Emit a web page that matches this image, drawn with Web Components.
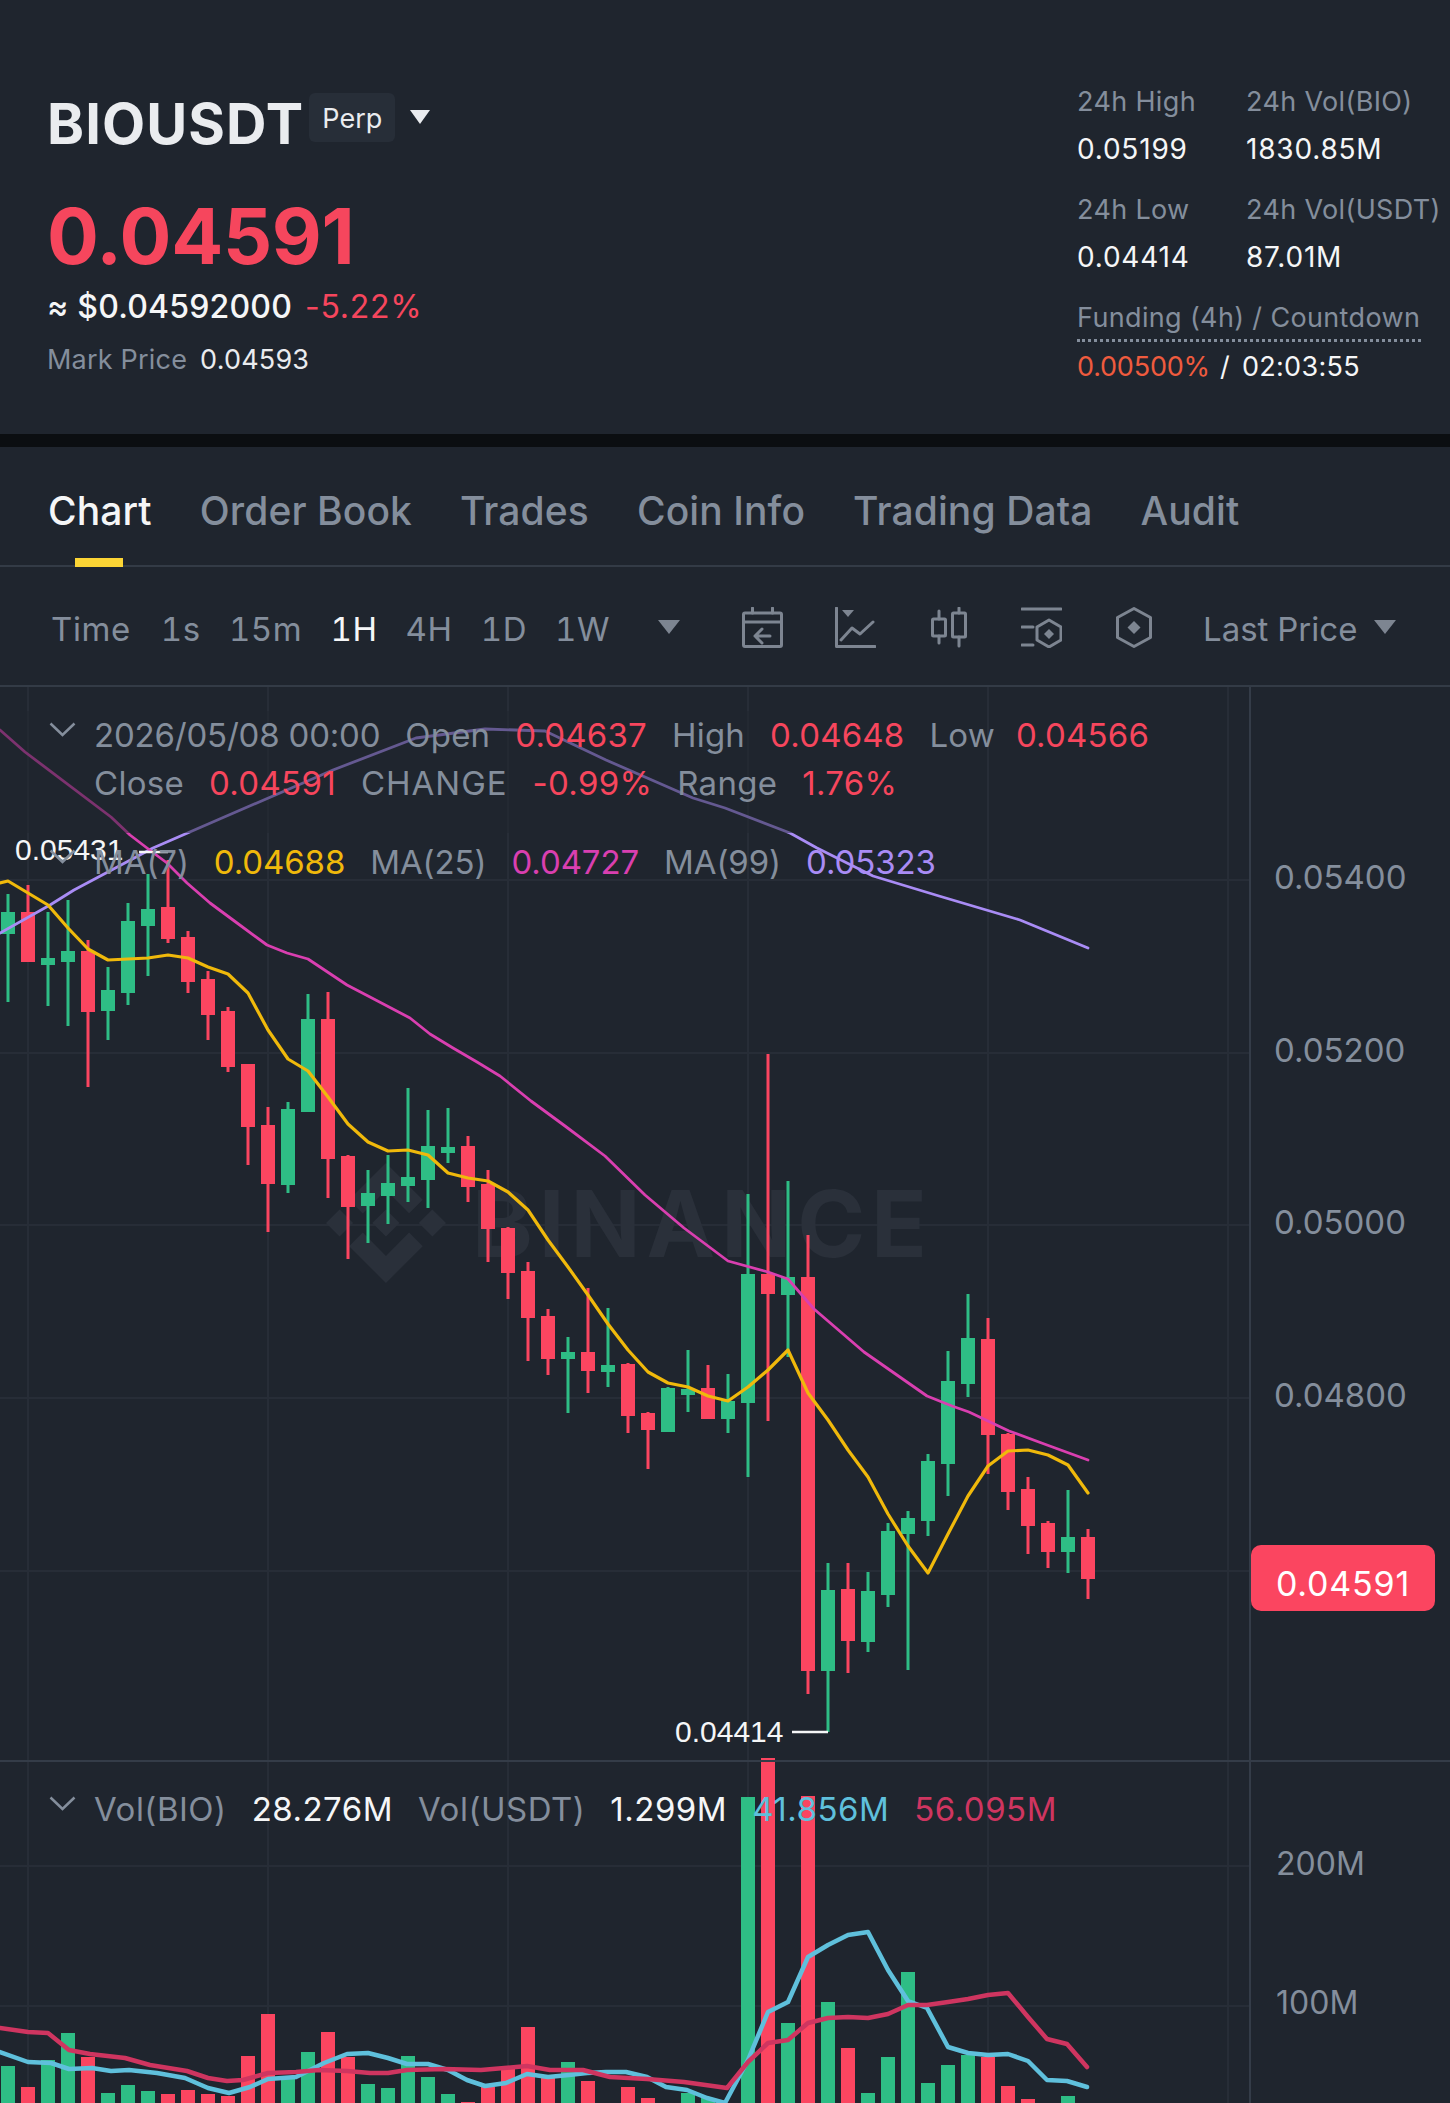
<!doctype html>
<html>
<head>
<meta charset="utf-8">
<title>BIOUSDT Perp</title>
<style>
  html, body { margin: 0; padding: 0; background: #1f252e; }
  body { font-family: Inter, "Liberation Sans", sans-serif; color: #eaecef; width: 1450px; height: 2103px; overflow: hidden; }
</style>
</head>
<body>
<ticker-header></ticker-header>
<chart-tabs active="Chart" items="Chart|Order Book|Trades|Coin Info|Trading Data|Audit"></chart-tabs>
<chart-toolbar></chart-toolbar>
<kline-chart>
  <chart-legend slot="main">
    <legend-row chevron>
      <span style="letter-spacing:-.2px">2026/05/08 00:00</span><span>Open</span><b>0.04637</b><span>High</span><b>0.04648</b><span style="margin-right:21px">Low</span><b>0.04566</b>
    </legend-row>
    <legend-row indent style="letter-spacing:.3px">
      <span>Close</span><b>0.04591</b><span style="letter-spacing:1px">CHANGE</span><b>-0.99%</b><span>Range</span><b>1.76%</b>
    </legend-row>
  </chart-legend>
  <legend-row slot="ma" chevron style="letter-spacing:-.1px">
    <span>MA(7)</span><b style="color:#f0b90b">0.04688</b><span>MA(25)</span><b style="color:#d93fb0">0.04727</b><span>MA(99)</span><b style="color:#a98cf5">0.05323</b>
  </legend-row>
  <legend-row slot="vol" chevron style="letter-spacing:.5px">
    <span>Vol(BIO)</span><b style="color:#f5f6f7">28.276M</b><span>Vol(USDT)</span><b style="color:#f5f6f7">1.299M</b><b style="color:#5fc0dc">41.856M</b><b style="color:#cf3560">56.095M</b>
  </legend-row>
</kline-chart>

<script>
class StatCell extends HTMLElement {
  constructor() {
    super()
    this.attachShadow({ mode: 'open' })
  }

  connectedCallback() {
    this.shadowRoot.innerHTML = `
      <style>
        :host { display: flex; flex-direction: column; gap: 11px; font-size: 27px; line-height: 36px; white-space: nowrap; }
        .label { color: #848e9c; letter-spacing: 0.35px; }
        .value { color: #f5f6f7; font-size: 28px; letter-spacing: 0.8px; }
        :host([dotted]) { gap: 7px; }
        :host([dotted]) .label { border-bottom: 3px dotted #848e9c; padding-bottom: 3px; }
        :host([dotted]) .value { font-size: 27px; letter-spacing: 0.3px; }
      </style>
      <div class="label">${this.getAttribute('label')}</div>
      <div class="value"><slot></slot></div>
    `
  }
}
customElements.define('stat-cell', StatCell)

class TickerHeader extends HTMLElement {
  constructor() {
    super()
    this.attachShadow({ mode: 'open' })
  }

  connectedCallback() {
    this.shadowRoot.innerHTML = `
      <style>
        :host { display: flex; justify-content: space-between; box-sizing: border-box; height: 447px; padding: 0 0 0 47px; background: #1f252e; border-bottom: 13px solid #0b0e11; white-space: nowrap; }
        .left { display: flex; flex-direction: column; padding-top: 93px; }
        .symbol { display: flex; align-items: flex-start; height: 60px; }
        .name { font-size: 56px; line-height: 62px; font-weight: 700; color: #eaecef; letter-spacing: 1.1px; }
        .perp { margin-left: 5px; height: 49px; line-height: 52px; padding: 0 13px; font-size: 27px; background: #272e38; border-radius: 6px; color: #eaecef; }
        .caret { margin: 17px 0 0 15px; width: 0; height: 0; border-left: 10px solid transparent; border-right: 10px solid transparent; border-top: 14px solid #eaecef; }
        .price { margin-top: 43px; font-size: 77px; line-height: 80px; font-weight: 700; color: #f6465d; letter-spacing: -0.3px; }
        .fiat { margin-top: 11px; display: flex; gap: 13px; font-size: 32px; line-height: 40px; font-weight: 500; letter-spacing: 0.2px; color: #f5f6f7; }
        .fiat b { font-weight: 400; color: #f6465d; letter-spacing: 0.7px; }
        .mark { margin-top: 15px; display: flex; gap: 13px; font-size: 27px; line-height: 36px; letter-spacing: 0.2px; }
        .mark span { color: #848e9c; }
        .stats { display: grid; grid-template-columns: 169px auto; row-gap: 25px; align-content: start; padding-top: 84px; margin-right: 10px; width: 363px; }
        .wide { grid-column: 1 / 3; width: 344px; }
        .red { color: #ef5b3e; letter-spacing: -0.2px; }
        .sep { margin: 0 12px 0 10px; }
      </style>
      <div class="left">
        <div class="symbol"><span class="name">BIOUSDT</span><span class="perp">Perp</span><span class="caret"></span></div>
        <div class="price">0.04591</div>
        <div class="fiat"><span>≈ $0.04592000</span><b>-5.22%</b></div>
        <div class="mark"><span>Mark Price</span>0.04593</div>
      </div>
      <div class="stats">
        <stat-cell label="24h High">0.05199</stat-cell>
        <stat-cell label="24h Vol(BIO)">1830.85M</stat-cell>
        <stat-cell label="24h Low">0.04414</stat-cell>
        <stat-cell label="24h Vol(USDT)">87.01M</stat-cell>
        <stat-cell class="wide" dotted label="Funding (4h) / Countdown"><span class="red">0.00500%</span><span class="sep">/</span>02:03:55</stat-cell>
      </div>
    `
  }
}
customElements.define('ticker-header', TickerHeader)

class ChartTabs extends HTMLElement {
  constructor() {
    super()
    this.attachShadow({ mode: 'open' })
  }

  connectedCallback() {
    const active = this.getAttribute('active')
    const items = this.getAttribute('items').split('|')
    this.shadowRoot.innerHTML = `
      <style>
        :host { display: flex; gap: 48px; box-sizing: border-box; height: 120px; padding: 41px 0 0 48px; border-bottom: 2px solid #333b46; font-size: 39px; line-height: 46px; font-weight: 500; color: #848e9c; letter-spacing: 0.1px; white-space: nowrap; }
        .tab { position: relative; }
        .on { color: #f5f6f7; }
        .on::after { content: ''; position: absolute; left: 27px; top: 70px; width: 48px; height: 9px; background: #fcd535; }
      </style>
      ${items.map(t => `<span class="tab ${t === active ? 'on' : ''}">${t}</span>`).join('')}
    `
  }
}
customElements.define('chart-tabs', ChartTabs)

class ChartToolbar extends HTMLElement {
  constructor() {
    super()
    this.attachShadow({ mode: 'open' })
  }

  connectedCallback() {
    this.shadowRoot.innerHTML = `
      <style>
        :host { display: flex; align-items: center; box-sizing: border-box; height: 120px; padding: 2px 0 0 51px; border-bottom: 2px solid #333b46; font-size: 33px; line-height: 40px; color: #848e9c; white-space: nowrap; letter-spacing: 0.6px; font-variant-numeric: tabular-nums; }
        .times { display: flex; gap: 28px; width: 555px; margin-top: 4px; }
        .time { letter-spacing: 0.6px; margin-right: 2px; }
        .on { color: #f5f6f7; }
        .caret { width: 0; height: 0; border-left: 11px solid transparent; border-right: 11px solid transparent; border-top: 14px solid #7d8591; }
        svg { display: block; flex: none; fill: none; stroke: #7d8591; stroke-width: 3; stroke-linecap: round; stroke-linejoin: round; }
        svg .fill { fill: #7d8591; stroke: none; }
        .last { margin: 4px 0 0 51px; width: 153px; letter-spacing: 0; }
      </style>
      <div class="times"><span class="time">Time</span><span>1s</span><span>15m</span><span class="on">1H</span><span>4H</span><span>1D</span><span>1W</span></div>
      <span class="caret" style="margin-left:52px"></span>
      <svg style="margin-left:62px" width="41" height="41" viewBox="0 0 41 41"><rect x="1.5" y="6" width="38" height="33.5" rx="1.5"/><path d="M1.5 15H39.5M10.5 1V6M30.5 1V6M13 29H28M20 22L13 29L20 36"/></svg>
      <svg style="margin-left:52px" width="41" height="41" viewBox="0 0 41 41"><path d="M1.5 1V39.5H40M6 33L17 21L25 27L38 15"/><path class="fill" d="M7 3H19L13 10Z"/></svg>
      <svg style="margin-left:55px" width="36" height="41" viewBox="0 0 36 41"><rect x="1.5" y="12" width="13" height="17" rx="1"/><rect x="21.5" y="6" width="13" height="24" rx="1"/><path d="M8 4V12M8 29V36M28 1V6M28 30V39"/></svg>
      <svg style="margin-left:54px" width="41" height="41" viewBox="0 0 41 41"><path d="M1 2H40M1 20H12M1 38H12M28 13L40 20V33L28 40L16 33V20Z"/><path class="fill" d="M28 22L33 27L28 32L23 27Z"/></svg>
      <svg style="margin-left:54px" width="36" height="41" viewBox="0 0 36 41"><path d="M18 1.5L34.5 10.5V30.5L18 39.5L1.5 30.5V10.5Z"/><path class="fill" d="M18 14L24.5 20.5L18 27L11.5 20.5Z"/></svg>
      <span class="last">Last Price</span>
      <span class="caret" style="margin-left:18px"></span>
    `
  }
}
customElements.define('chart-toolbar', ChartToolbar)

class LegendRow extends HTMLElement {
  constructor() {
    super()
    this.attachShadow({ mode: 'open' })
  }

  connectedCallback() {
    const chevron = this.hasAttribute('chevron')
      ? '<svg width="27" height="15" viewBox="0 0 27 15"><path d="M1.5 1.5L13.5 13L25.5 1.5" fill="none" stroke="#848e9c" stroke-width="2.5"/></svg>'
      : ''
    this.shadowRoot.innerHTML = `
      <style>
        :host { display: flex; align-items: center; height: 48px; padding-left: 94px; font-size: 33px; line-height: 48px; white-space: nowrap; color: #848e9c; letter-spacing: 0.2px; }
        svg { position: absolute; left: 49px; margin-top: -12px; }
        ::slotted(*) { margin-right: 25px; font-weight: 400; }
        ::slotted(b) { color: #f6465d; }
      </style>
      ${chevron}<slot></slot>
    `
  }
}
customElements.define('legend-row', LegendRow)

class ChartLegend extends HTMLElement {
  constructor() {
    super()
    this.attachShadow({ mode: 'open' })
  }

  connectedCallback() {
    this.shadowRoot.innerHTML = `
      <style>
        :host { display: block; width: 905px; padding-bottom: 26px; background: rgba(31, 37, 46, 0.5); }
      </style>
      <slot></slot>
    `
  }
}
customElements.define('chart-legend', ChartLegend)

// x, wick top, body top, body bottom, wick bottom, up?
const CANDLES = [
  [8, 894, 912, 934, 1002, 1], [28, 885, 912, 962, 962, 0], [48, 912, 958, 965, 1006, 1], [68, 900, 951, 962, 1026, 1],
  [88, 940, 951, 1012, 1087, 0], [108, 967, 990, 1011, 1040, 1], [128, 903, 921, 993, 1005, 1], [148, 874, 909, 926, 976, 1],
  [168, 860, 907, 939, 943, 0], [188, 931, 937, 982, 993, 0], [208, 971, 979, 1015, 1040, 0], [228, 1007, 1011, 1067, 1072, 0],
  [248, 1064, 1064, 1127, 1165, 0], [268, 1107, 1125, 1184, 1232, 0], [288, 1102, 1109, 1185, 1193, 1], [308, 994, 1019, 1112, 1112, 1],
  [328, 992, 1019, 1159, 1198, 0], [348, 1155, 1156, 1207, 1259, 0], [368, 1170, 1193, 1206, 1243, 1], [388, 1155, 1183, 1196, 1224, 1],
  [408, 1088, 1177, 1186, 1202, 1], [428, 1110, 1146, 1180, 1208, 1], [448, 1108, 1147, 1153, 1163, 1], [468, 1136, 1146, 1187, 1202, 0],
  [488, 1170, 1184, 1229, 1262, 0], [508, 1227, 1228, 1273, 1299, 0], [528, 1262, 1271, 1318, 1361, 0], [548, 1309, 1316, 1359, 1375, 0],
  [568, 1337, 1352, 1359, 1413, 1], [588, 1288, 1352, 1371, 1393, 0], [608, 1308, 1365, 1372, 1387, 1], [628, 1363, 1364, 1416, 1433, 0],
  [648, 1412, 1413, 1430, 1469, 0], [668, 1387, 1388, 1432, 1432, 1], [688, 1350, 1389, 1395, 1412, 1], [708, 1365, 1388, 1419, 1419, 0],
  [728, 1374, 1401, 1419, 1433, 1], [748, 1194, 1274, 1403, 1477, 1], [768, 1054, 1274, 1294, 1421, 0], [788, 1181, 1277, 1295, 1357, 1],
  [808, 1235, 1277, 1671, 1694, 0], [828, 1563, 1590, 1671, 1732, 1], [848, 1563, 1589, 1641, 1673, 0], [868, 1572, 1591, 1642, 1652, 1],
  [888, 1523, 1531, 1595, 1607, 1], [908, 1511, 1518, 1534, 1670, 1], [928, 1454, 1461, 1521, 1536, 1], [948, 1351, 1381, 1464, 1496, 1],
  [968, 1294, 1338, 1384, 1397, 1], [988, 1318, 1339, 1435, 1474, 0], [1008, 1433, 1434, 1492, 1510, 0], [1028, 1477, 1489, 1526, 1554, 0],
  [1048, 1521, 1523, 1552, 1568, 0], [1068, 1490, 1537, 1552, 1573, 1], [1088, 1529, 1537, 1579, 1599, 0]
]

const MA7 = '0,883 8,881 28,893 48,905 68,928 88,949 108,960 128,959 148,958 168,955 188,958 208,967 228,974 248,993 268,1030 288,1059 308,1071 328,1097 348,1124 368,1142 388,1151 408,1150 428,1155 448,1173 468,1178 488,1181 508,1192 528,1210 548,1240 568,1267 588,1295 608,1324 628,1350 648,1372 668,1383 688,1387 708,1396 728,1401 748,1387 768,1370 788,1350 808,1393 828,1420 848,1450 868,1477 888,1514 908,1546 928,1573 948,1534 968,1496 988,1466 1008,1451 1028,1450 1048,1455 1068,1465 1088,1493'
const MA25 = '0,730 25,752 111,817 130,835 147,848 167,863 187,883 210,903 233,920 267,945 287,953 308,959 347,985 370,997 410,1018 430,1034 453,1048 477,1062 500,1076 531,1101 565,1126 605,1156 645,1195 684,1228 728,1261 768,1272 788,1279 814,1309 864,1352 927,1396 952,1406 969,1412 1009,1431 1047,1445 1088,1460'
const MA99 = '0,933 50,905 74,890 153,848 222,818 333,770 416,738 485,729 545,731 606,760 693,798 725,808 790,833 817,848 873,876 939,896 1020,920 1088,948'
const VOL_BLUE = '0,2052 28,2062 51,2063 69,2069 92,2068 111,2071 129,2070 157,2073 185,2078 208,2088 229,2093 250,2087 268,2079 296,2077 324,2063 347,2054 368,2053 388,2058 407,2064 428,2064 448,2070 467,2080 485,2086 506,2083 527,2074 548,2077 569,2075 587,2073 606,2072 626,2072 647,2077 666,2087 687,2090 707,2098 725,2103 748,2060 768,2012 788,2002 808,1957 828,1945 848,1935 868,1932 888,1970 908,2001 927,2008 948,2047 968,2053 988,2055 1008,2054 1028,2061 1047,2080 1067,2081 1087,2087'
const VOL_RED = '0,2028 28,2032 48,2033 69,2050 90,2054 125,2058 150,2065 187,2071 208,2078 227,2081 243,2080 268,2073 296,2072 319,2070 347,2071 370,2073 388,2073 407,2070 444,2069 481,2070 527,2066 550,2070 583,2070 610,2077 647,2079 684,2082 727,2088 748,2062 768,2043 788,2040 808,2023 828,2018 848,2017 868,2018 888,2014 908,2005 927,2005 948,2002 968,1999 988,1995 1008,1993 1028,2017 1047,2039 1067,2044 1087,2067'

// x, top, up?
const VOL_BARS = [
  [8, 2066, 1], [28, 2087, 0], [48, 2060, 1], [68, 2033, 1], [88, 2057, 0], [108, 2093, 1], [128, 2085, 1], [148, 2091, 1], [168, 2094, 0],
  [188, 2090, 0], [208, 2094, 0], [228, 2096, 0], [248, 2056, 0], [268, 2014, 0], [288, 2077, 1], [308, 2052, 1], [328, 2032, 0], [348, 2057, 0],
  [368, 2084, 1], [388, 2088, 1], [408, 2056, 1], [428, 2077, 1], [448, 2094, 1], [468, 2102, 0], [488, 2087, 0], [508, 2068, 0], [528, 2027, 0],
  [548, 2078, 0], [568, 2062, 1], [588, 2081, 0], [628, 2087, 0], [648, 2098, 0], [688, 2093, 1], [708, 2098, 1], [748, 1797, 1], [768, 1758, 0],
  [788, 2023, 1], [808, 1796, 0], [828, 2002, 1], [848, 2048, 0], [868, 2093, 1], [888, 2057, 1], [908, 1972, 1], [928, 2083, 1], [948, 2065, 1],
  [968, 2055, 1], [988, 2057, 0], [1008, 2086, 0], [1028, 2099, 0], [1068, 2096, 1]
]

const UP = '#2ebd85'
const DOWN = '#fb4560'

class KlineChart extends HTMLElement {
  constructor() {
    super()
    this.attachShadow({ mode: 'open' })
  }

  connectedCallback() {
    const grid = [28, 268, 508, 748, 988, 1228].map(x => `<path d="M${x} 687V2103"/>`).join('')
      + [880, 1053, 1225, 1398, 1571, 1866, 2006].map(y => `<path d="M0 ${y}H1250"/>`).join('')
    const candles = CANDLES.map(([x, wt, bt, bb, wb, up]) => {
      const c = up ? UP : DOWN
      return `<rect x="${x - 1.5}" y="${wt}" width="3" height="${wb - wt}" fill="${c}"/><rect x="${x - 7}" y="${bt}" width="14" height="${bb - bt}" fill="${c}"/>`
    }).join('')
    const bars = VOL_BARS.map(([x, top, up]) => `<rect x="${x - 7}" y="${top}" width="14" height="${2103 - top}" fill="${up ? UP : DOWN}"/>`).join('')
    const prices = [['0.05400', 889], ['0.05200', 1062], ['0.05000', 1234], ['0.04800', 1407]]
      .map(([t, y]) => `<text x="1274" y="${y}" style="font-size:33px">${t}</text>`).join('')

    this.shadowRoot.innerHTML = `
      <style>
        :host { display: block; position: relative; height: 1416px; overflow: hidden; }
        svg { display: block; position: absolute; left: 0; top: 0; }
        .grid { stroke: #272d37; stroke-width: 2; fill: none; }
        .axis { stroke: #343c48; stroke-width: 2; fill: none; }
        .mark-logo { fill: #2a303a; }
        .mark-text { fill: #2a303a; font-size: 92px; font-weight: 700; }
        .ma { fill: none; stroke-linejoin: round; stroke-linecap: round; }
        .labels text { fill: #848e9c; font-size: 32px; }
        .pin { font-family: "Liberation Sans", sans-serif; font-size: 30px; fill: #f5f6f7; }
        .pill { position: absolute; left: 1251px; top: 858px; width: 184px; height: 66px; box-sizing: border-box; padding-top: 10px; background: ${DOWN}; border-radius: 10px; color: #fff; font-size: 34px; line-height: 58px; letter-spacing: 0.8px; text-align: center; }
        .main { position: absolute; left: 0; top: 24px; }
        .ma-row { position: absolute; left: 0; top: 151px; }
        .vol-row { position: absolute; left: 0; top: 1098px; }
      </style>
      <svg width="1450" height="1416" viewBox="0 687 1450 1416">
        <g class="grid">${grid}</g>
        <g class="mark-logo" transform="translate(326 1163) scale(5)"><path d="M16.624 13.9202l2.7175 2.7154-7.353 7.353-7.353-7.352 2.7175-2.7164 4.6355 4.6595 4.6356-4.6595zm4.6366-4.6366L24 12l-2.7154 2.7164L18.5682 12l2.6924-2.7164zm-9.272.001l2.7163 2.6914-2.7164 2.7174v-.001L9.2721 12l2.7164-2.7154zm-9.2722-.001L5.4088 12l-2.6914 2.6924L0 12l2.7164-2.7164zM11.9885.0115l7.353 7.329-2.7174 2.7154-4.6356-4.6356-4.6355 4.6595-2.7174-2.7154 7.353-7.353z"/></g>
        <text class="mark-text" x="472" y="1257" textLength="455" lengthAdjust="spacing">BINANCE</text>
        ${candles}
        <polyline class="ma" points="${MA99}" stroke="#a98cf5" stroke-width="2.8"/>
        <polyline class="ma" points="${MA25}" stroke="#d93fb0" stroke-width="2.8"/>
        <polyline class="ma" points="${MA7}" stroke="#f0b90b" stroke-width="3.2"/>
        <text class="pin" x="15" y="860">0.05431</text>
        <path d="M139 852H168M792 1732H828" stroke="#f5f6f7" stroke-width="2.5"/>
        <text class="pin" x="675" y="1742">0.04414</text>
        ${bars}
        <polyline class="ma" points="${VOL_BLUE}" stroke="#5fc0dc" stroke-width="4.5"/>
        <polyline class="ma" points="${VOL_RED}" stroke="#cf3560" stroke-width="4.5"/>
        <path class="axis" d="M1250 687V2103M0 1761H1450"/>
        <g class="labels">${prices}<text x="1276" y="1875">200M</text><text x="1276" y="2014">100M</text></g>
      </svg>
      <div class="main"><slot name="main"></slot></div>
      <div class="ma-row"><slot name="ma"></slot></div>
      <div class="vol-row"><slot name="vol"></slot></div>
      <div class="pill">0.04591</div>
    `
  }
}
customElements.define('kline-chart', KlineChart)
</script>
</body>
</html>
